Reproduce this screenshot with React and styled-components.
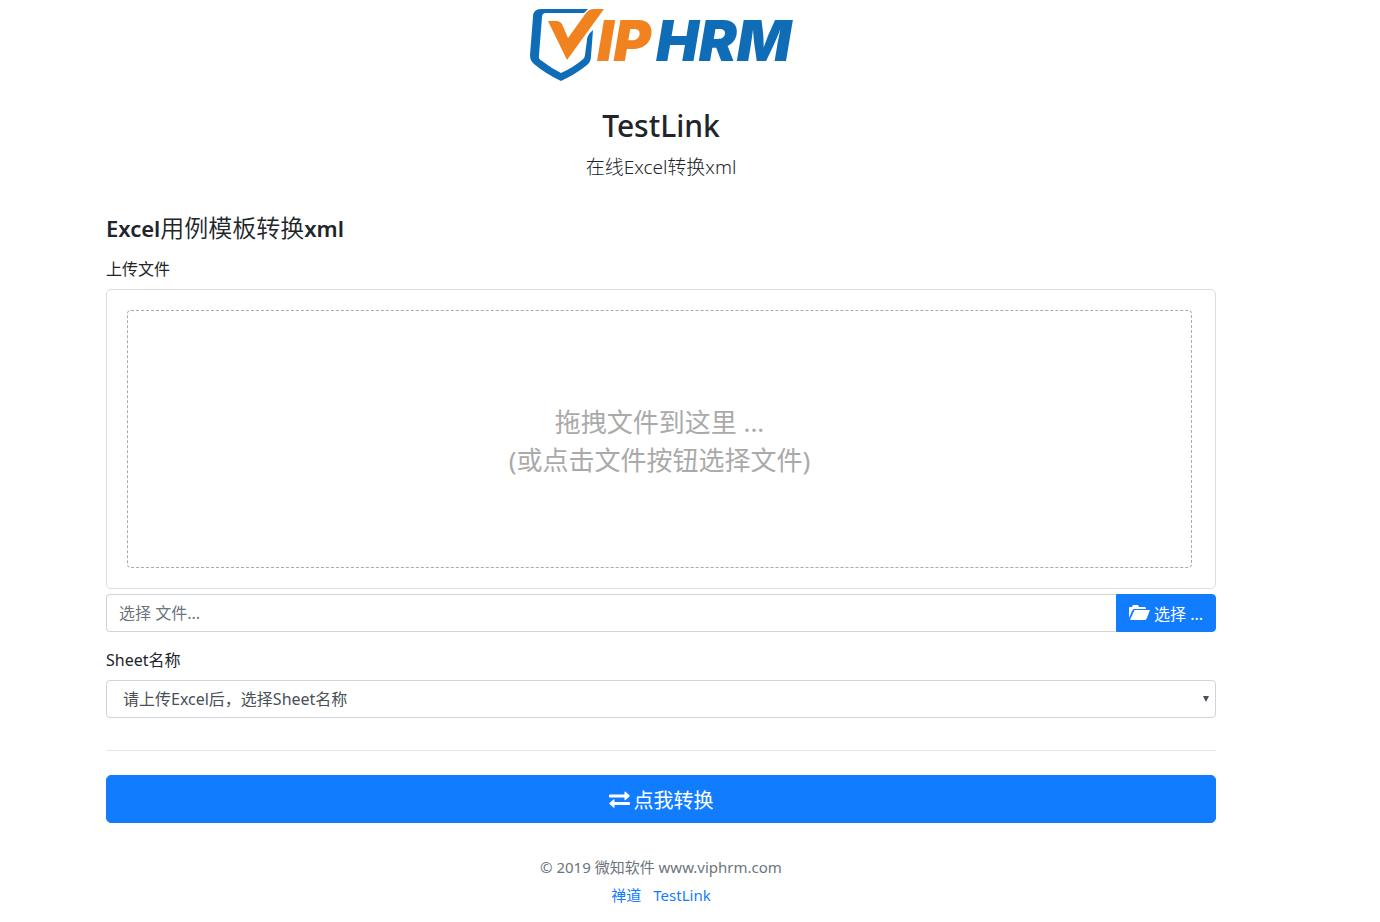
import React from "react";
import styled, { createGlobalStyle } from "styled-components";

const GlobalStyle = createGlobalStyle`
  *, *::before, *::after { box-sizing: border-box; }
  body {
    margin: 0;
    background: #fff;
    color: #212529;
    font-family: "Noto Sans", "Noto Sans CJK SC", sans-serif;
    font-size: 16px;
    line-height: 24px;
  }
`;

const Page = styled.div`
  padding: 0 58px 8px 0;
`;

const Container = styled.div`
  max-width: 1140px;
  margin: 0 auto;
  padding: 0 15px;
`;

const Header = styled.header`
  display: flex;
  flex-direction: column;
  align-items: center;
  text-align: center;
  margin-bottom: 32px;
`;

const Logo = styled.svg`
  display: block;
  width: 278px;
  height: 83px;
  margin-bottom: 24px;
  overflow: visible;
`;

const LogoText = styled.text`
  font-family: Inter, sans-serif;
  font-size: 57px;
  font-weight: 900;
  font-style: italic;
`;

const Title = styled.h1`
  margin: 0 0 8px;
  font-size: 30px;
  font-weight: 500;
  line-height: 38px;
`;

const Lead = styled.p`
  margin: 0;
  font-size: 19px;
  font-weight: 300;
  line-height: 28px;
`;

const SectionTitle = styled.h2`
  margin: 0 0 14px;
  font-size: 22px;
  font-weight: 600;
  line-height: 29px;

  span {
    font-size: 24px;
    font-weight: 350;
  }
`;

const Field = styled.div`
  margin-bottom: ${(p) => p.$gap}px;
`;

const Label = styled.label`
  display: block;
  margin-bottom: 8px;
`;

const Preview = styled.div`
  margin-bottom: 5px;
  padding: 20px 23px 20px 20px;
  border: 1px solid #ddd;
  border-radius: 5px;
`;

const DropZone = styled.div`
  padding: 92px 20px 88px;
  border: 1px dashed #aaa;
  border-radius: 4px;
  color: #aaa;
  font-size: 26px;
  line-height: 38px;
  text-align: center;
`;

const InputGroup = styled.div`
  display: flex;
`;

const TextInput = styled.input`
  flex: 1;
  min-width: 0;
  height: 38px;
  padding: 6px 12px;
  border: 1px solid #ced4da;
  border-right: 0;
  border-radius: 4px 0 0 4px;
  background: #fff;
  color: #495057;
  font: inherit;

  &::placeholder { color: #6c757d; opacity: 1; }
`;

const Button = styled.button`
  display: flex;
  align-items: center;
  justify-content: center;
  gap: 4px;
  border: 1px solid #127cff;
  background: #127cff;
  color: #fff;
  font-family: inherit;
  cursor: pointer;
`;

const BrowseButton = styled(Button)`
  height: 38px;
  padding: 0 12px;
  border-radius: 0 4px 4px 0;
  font-size: 16px;
`;

const SubmitButton = styled(Button)`
  width: 100%;
  height: 48px;
  border-radius: 5px;
  font-size: 20px;
`;

const SelectWrap = styled.div`
  position: relative;
`;

const Select = styled.select`
  display: block;
  width: 100%;
  height: 38px;
  padding: 6px 16px;
  border: 1px solid #ced4da;
  border-radius: 4px;
  background: #fff;
  color: #495057;
  font: inherit;
  appearance: none;
`;

const Caret = styled.svg`
  position: absolute;
  top: 16px;
  right: 7px;
  pointer-events: none;
`;

const Divider = styled.hr`
  margin: 0 0 24px;
  border: 0;
  border-top: 1px solid #e5e5e5;
`;

const Footer = styled.footer`
  margin-top: 32px;
  color: #6c757d;
  font-size: 15px;
  text-align: center;

  p { margin: 0 0 4px; }
`;

const Links = styled.nav`
  display: flex;
  justify-content: center;
  gap: 12px;
`;

const Link = styled.a`
  color: #127cff;
  text-decoration: none;
`;

function VipLogo() {
  return (
    <Logo viewBox="522 0 278 83" role="img" aria-label="VIPHRM">
      <path
        fill="#0f6db8"
        d="M588 9H541Q533 9 533 17L530 55Q530 61 534 64Q546 74 561 81Q576 74 587 65Q591 62 591 56L593 30Q587 35 587 40L585 55Q585 58 582 60Q574 67 561 73Q551 68 542 61Q538 59 539 55L542 17Q542 13 546 13H584Z"
      />
      <path
        fill="#f08220"
        d="M548 21H557Q560 21 562 24L568 38L586 13Q589 9 594 9H604L567 60Z"
      />
      <LogoText fill="#f08220" x="597" y="61">IP</LogoText>
      <LogoText fill="#0f6db8" x="656" y="61">HRM</LogoText>
    </Logo>
  );
}

function FolderIcon() {
  return (
    <svg width="21" height="16" viewBox="0 0 21 16" fill="currentColor" aria-hidden="true">
      <path d="M0 13V3Q0 2 1 2H3L4 0H9L10 2H16Q17 2 17 4H5Q4 4 3 6Z" />
      <path d="M5.500 5H20.500Q21 5 20.800 5.600L17.500 14Q17 15 16 15H1Z" />
    </svg>
  );
}

function ExchangeIcon() {
  return (
    <svg width="21" height="18" viewBox="0 0 21 18" fill="currentColor" aria-hidden="true">
      <path d="M1 4.500H15.500V2Q15.500 1 16.500 1.700L20.500 5.200Q21 5.800 20.500 6.400L16.500 9.900Q15.500 10.500 15.500 9.500V7.500H1Q0 7.500 0 6.500V5.500Q0 4.500 1 4.500Z" />
      <path d="M20 12H5.500V9.800Q5.500 8.800 4.500 9.500L.5 13Q0 13.500.5 14L4.500 17.500Q5.500 18 5.500 17V15H20Q21 15 21 14V13Q21 12 20 12Z" />
    </svg>
  );
}

export default function App() {
  return (
    <>
      <GlobalStyle />
      <Page>
        <Container>
          <Header>
            <VipLogo />
            <Title>TestLink</Title>
            <Lead>在线Excel转换xml</Lead>
          </Header>
          <main>
            <SectionTitle>
              Excel<span>用例模板转换</span>xml
            </SectionTitle>
            <form onSubmit={(e) => e.preventDefault()}>
              <Field $gap={16}>
                <Label htmlFor="file-name">上传文件</Label>
                <Preview>
                  <DropZone>
                    拖拽文件到这里 ...
                    <br />
                    (或点击文件按钮选择文件)
                  </DropZone>
                </Preview>
                <InputGroup>
                  <TextInput id="file-name" type="text" placeholder="选择 文件..." readOnly />
                  <BrowseButton type="button">
                    <FolderIcon />
                    <span>选择 ...</span>
                  </BrowseButton>
                </InputGroup>
              </Field>
              <Field $gap={32}>
                <Label htmlFor="sheet-name">Sheet名称</Label>
                <SelectWrap>
                  <Select id="sheet-name">
                    <option>请上传Excel后，选择Sheet名称</option>
                  </Select>
                  <Caret width="6" height="6" viewBox="0 0 6 6" fill="#495057" aria-hidden="true">
                    <path d="M0 0H6L3 6Z" />
                  </Caret>
                </SelectWrap>
              </Field>
              <Divider />
              <SubmitButton type="submit">
                <ExchangeIcon />
                <span>点我转换</span>
              </SubmitButton>
            </form>
          </main>
          <Footer>
            <p>© 2019 微知软件 www.viphrm.com</p>
            <Links>
              <Link href="#zentao">禅道</Link>
              <Link href="#testlink">TestLink</Link>
            </Links>
          </Footer>
        </Container>
      </Page>
    </>
  );
}
